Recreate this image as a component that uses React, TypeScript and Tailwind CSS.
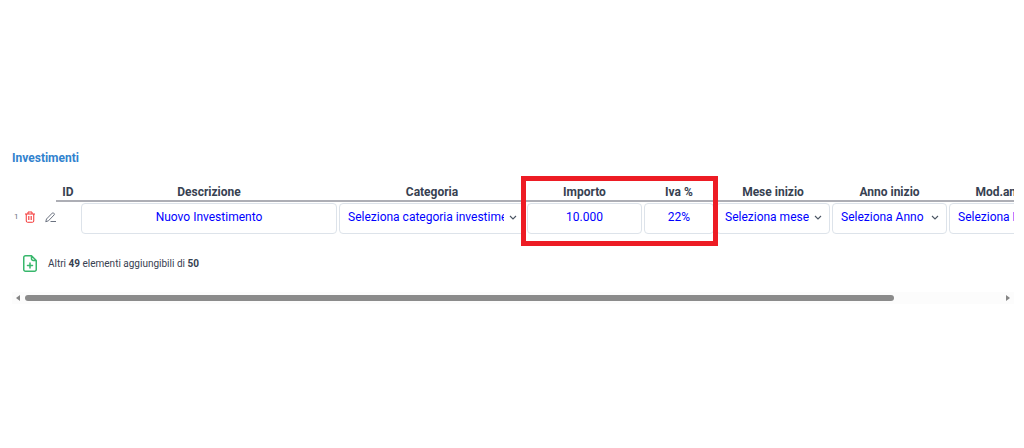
import type { ReactNode } from "react";

interface Field {
  id: string;
  label: string;
  value: string;
}

const COLUMNS = [
  { label: "ID", width: "w-[24px]" },
  { label: "Descrizione", width: "w-[258px]" },
  { label: "Categoria", width: "w-[188px]" },
  { label: "Importo", width: "w-[117px]" },
  { label: "Iva %", width: "w-[72px]" },
  { label: "Mese inizio", width: "w-[116px]" },
  { label: "Anno inizio", width: "w-[117px]" },
  { label: "Mod.annuale", width: "w-[125px]" },
];

const INPUT_FIELDS: Field[] = [
  { id: "importo", label: "Importo", value: "10.000" },
  { id: "iva", label: "Iva %", value: "22%" },
];

const SELECT_FIELDS: Field[] = [
  { id: "mese", label: "Mese inizio", value: "Seleziona mese" },
  { id: "anno", label: "Anno inizio", value: "Seleziona Anno" },
  { id: "modalita", label: "Mod.annuale", value: "Seleziona Modalità" },
];

function TrashIcon() {
  return (
    <svg width="10" height="12" viewBox="0 0 20 24" fill="none" stroke="currentColor" strokeWidth="2" strokeLinejoin="round">
      <path d="M0 6h20M6 6V2h8v4M2.5 6v14a2.5 2.5 0 0 0 2.5 2.5h10a2.5 2.5 0 0 0 2.5-2.5V6" />
      <path d="M7 10v8M10 10v8M13 10v8" strokeWidth="1.5" />
    </svg>
  );
}

function PencilIcon() {
  return (
    <svg width="11" height="11" viewBox="0 0 22 22" fill="none" stroke="currentColor" strokeWidth="2" strokeLinejoin="round">
      <path d="M1.5 19.5L3 14 14.5 2.2a2 2 0 0 1 2.9 0l.8.8a2 2 0 0 1 0 2.9L7 17.5l-5.5 2zM11 19h11" />
    </svg>
  );
}

function FileAddIcon() {
  return (
    <svg width="14" height="17" viewBox="0 0 28 34" fill="none" stroke="currentColor" strokeWidth="3" strokeLinejoin="round" strokeLinecap="round">
      <path d="M17 1.5H5A3.5 3.5 0 0 0 1.5 5v24A3.5 3.5 0 0 0 5 32.5h18a3.5 3.5 0 0 0 3.5-3.5V11L17 1.5v6a3.5 3.5 0 0 0 3.5 3.5h6" />
      <path d="M14 16v10M9 21h10" />
    </svg>
  );
}

function Cell({ children }: { children?: ReactNode }) {
  return <td className="p-px">{children}</td>;
}

function TextField({ label, value }: { label: string; value: string }) {
  return (
    <input
      type="text"
      aria-label={label}
      defaultValue={value}
      className="block h-[31px] w-full rounded border border-[#dde3ea] bg-white px-2 pb-[3px] text-center text-xs text-[#0000ff]"
    />
  );
}

function SelectField({ label, placeholder }: { label: string; placeholder: string }) {
  return (
    <div className="relative">
      <select
        aria-label={label}
        className="block h-[31px] w-full appearance-none rounded border border-[#dde3ea] bg-white pb-[3px] pl-2 pr-5 text-xs text-[#0000ff]"
      >
        <option>{placeholder}</option>
      </select>
      <svg
        className="pointer-events-none absolute right-2 top-3 text-[#4b5563]"
        width="8"
        height="6"
        viewBox="0 0 8 6"
        fill="none"
        stroke="currentColor"
        strokeWidth="1.1"
      >
        <path d="M1 1l3 3 3-3" />
      </svg>
    </div>
  );
}

export default function App() {
  return (
    <main className="min-h-screen bg-white pl-3 pr-[10px] pt-[150px] font-['Roboto',sans-serif] text-[#374151]">
      <h2 className="text-xs leading-4 font-bold text-[#3182ce]">Investimenti</h2>

      <div className="relative overflow-hidden pt-[14px] pb-3">
        <table className="w-[1061px] table-fixed border-separate border-spacing-0 text-xs">
          <thead>
            <tr>
              <td className="w-[44px]" />
              {COLUMNS.map(({ label, width }) => (
                <th key={label} scope="col" className={`${width} h-[22px] border-b-2 border-[#adaeb5] p-0 pt-[3px] leading-4 font-bold`}>
                  {label}
                </th>
              ))}
            </tr>
          </thead>
          <tbody>
            <tr>
              <td className="p-0">
                <div className="flex items-center pb-[3px] pl-[2px]">
                  <span className="w-[11px] text-[8px] leading-4 text-gray-500">1</span>
                  <button type="button" aria-label="Elimina" className="text-[#f43535]">
                    <TrashIcon />
                  </button>
                  <button type="button" aria-label="Modifica" className="ml-[10px] text-[#6b7280]">
                    <PencilIcon />
                  </button>
                </div>
              </td>
              <Cell />
              <Cell>
                <TextField label="Descrizione" value="Nuovo Investimento" />
              </Cell>
              <Cell>
                <SelectField label="Categoria" placeholder="Seleziona categoria investimento" />
              </Cell>
              {INPUT_FIELDS.map(({ id, label, value }) => (
                <Cell key={id}>
                  <TextField label={label} value={value} />
                </Cell>
              ))}
              {SELECT_FIELDS.map(({ id, label, value }) => (
                <Cell key={id}>
                  <SelectField label={label} placeholder={value} />
                </Cell>
              ))}
            </tr>
          </tbody>
        </table>
        <div className="pointer-events-none absolute left-[509px] top-[10px] h-[70px] w-[197px] border-[5px] border-[#ed1c24]" />
      </div>

      <div className="mt-2 flex items-center gap-[11px] pl-[11px]">
        <button type="button" aria-label="Aggiungi elemento" className="text-[#38b76c]">
          <FileAddIcon />
        </button>
        <p className="text-[10px] leading-4">
          Altri <b>49</b> elementi aggiungibili di <b>50</b>
        </p>
      </div>

      <div className="mt-5 flex h-3 items-center gap-[5px] bg-[#fcfcfc] px-1">
        <svg width="4" height="6" viewBox="0 0 4 6" className="fill-[#858585]">
          <path d="M4 0v6L0 3z" />
        </svg>
        <div className="flex-1">
          <div className="h-[6px] w-[89%] rounded-full bg-[#8b8b8b]" />
        </div>
        <svg width="4" height="6" viewBox="0 0 4 6" className="fill-[#858585]">
          <path d="M0 0v6l4-3z" />
        </svg>
      </div>
    </main>
  );
}
